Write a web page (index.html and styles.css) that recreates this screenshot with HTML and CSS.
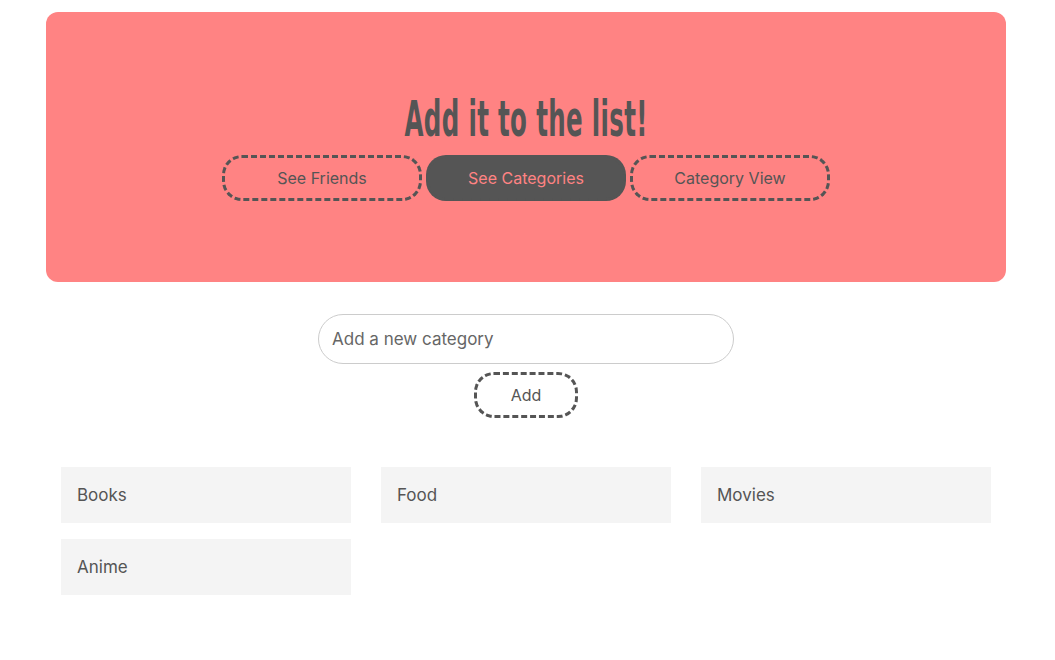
FILE: index.html
```html
<!DOCTYPE html>
<html>
<head>
<meta charset="utf-8">
<link rel="stylesheet" href="styles.css">
</head>
<body>
<div class="page">
  <header class="hero">
    <h1 class="title"><span class="title-text">Add it to the list!</span></h1>
    <nav class="nav">
      <button class="btn">See Friends</button>
      <button class="btn btn-active">See Categories</button>
      <button class="btn">Category View</button>
    </nav>
  </header>
  <form class="add-form">
    <input class="field" type="text" placeholder="Add a new category">
    <button class="btn btn-small" type="button">Add</button>
  </form>
  <div class="grid">
    <div class="card">Books</div>
    <div class="card">Food</div>
    <div class="card">Movies</div>
    <div class="card">Anime</div>
  </div>
</div>
</body>
</html>
```
FILE: styles.css
```css
html, body {
  margin: 0;
  padding: 0;
  background: #fff;
}
body {
  font-family: Inter, "DejaVu Sans", sans-serif;
  color: #555;
}
.page {
  width: 960px;
  margin: 0 0 0 46px;
  padding-top: 12px;
}
.hero {
  height: 270px;
  background: #ff8383;
  border-radius: 12px;
  display: flex;
  flex-direction: column;
  align-items: center;
  justify-content: center;
  box-sizing: border-box;
  padding-top: 2px;
}
.title {
  margin: 0 0 12px;
  font-family: "DejaVu Sans Condensed", "DejaVu Sans", sans-serif;
  font-weight: 700;
  font-size: 50px;
  line-height: 48px;
  color: #555;
  text-align: center;
}
.title-text {
  display: inline-block;
  transform: scaleX(0.545);
  letter-spacing: 0.6px;
}
.nav {
  display: flex;
  gap: 4px;
}
.btn {
  width: 200px;
  height: 46px;
  border: 3px dashed #555;
  border-radius: 20px;
  background: transparent;
  font-family: Inter, "DejaVu Sans", sans-serif;
  font-size: 16px;
  color: #555;
  padding: 0;
  box-sizing: border-box;
}
.btn-active {
  background: #555;
  border-color: #555;
  color: #ff8383;
}
.add-form {
  display: flex;
  flex-direction: column;
  align-items: center;
  gap: 8px;
  margin-top: 32px;
}
.field {
  width: 416px;
  height: 50px;
  box-sizing: border-box;
  border: 1px solid #ccc;
  border-radius: 25px;
  padding: 0 13px;
  font-family: Inter, "DejaVu Sans", sans-serif;
  font-size: 17px;
  color: #555;
  outline: none;
}
.field::placeholder {
  color: #666;
}
.btn-small {
  width: 104px;
}
.grid {
  display: grid;
  grid-template-columns: repeat(3, 290px);
  column-gap: 30px;
  row-gap: 16px;
  padding: 0 15px;
  margin-top: 49px;
}
.card {
  height: 56px;
  background: #f4f4f4;
  display: flex;
  align-items: center;
  padding-left: 16px;
  font-size: 17px;
  color: #555;
}
```
